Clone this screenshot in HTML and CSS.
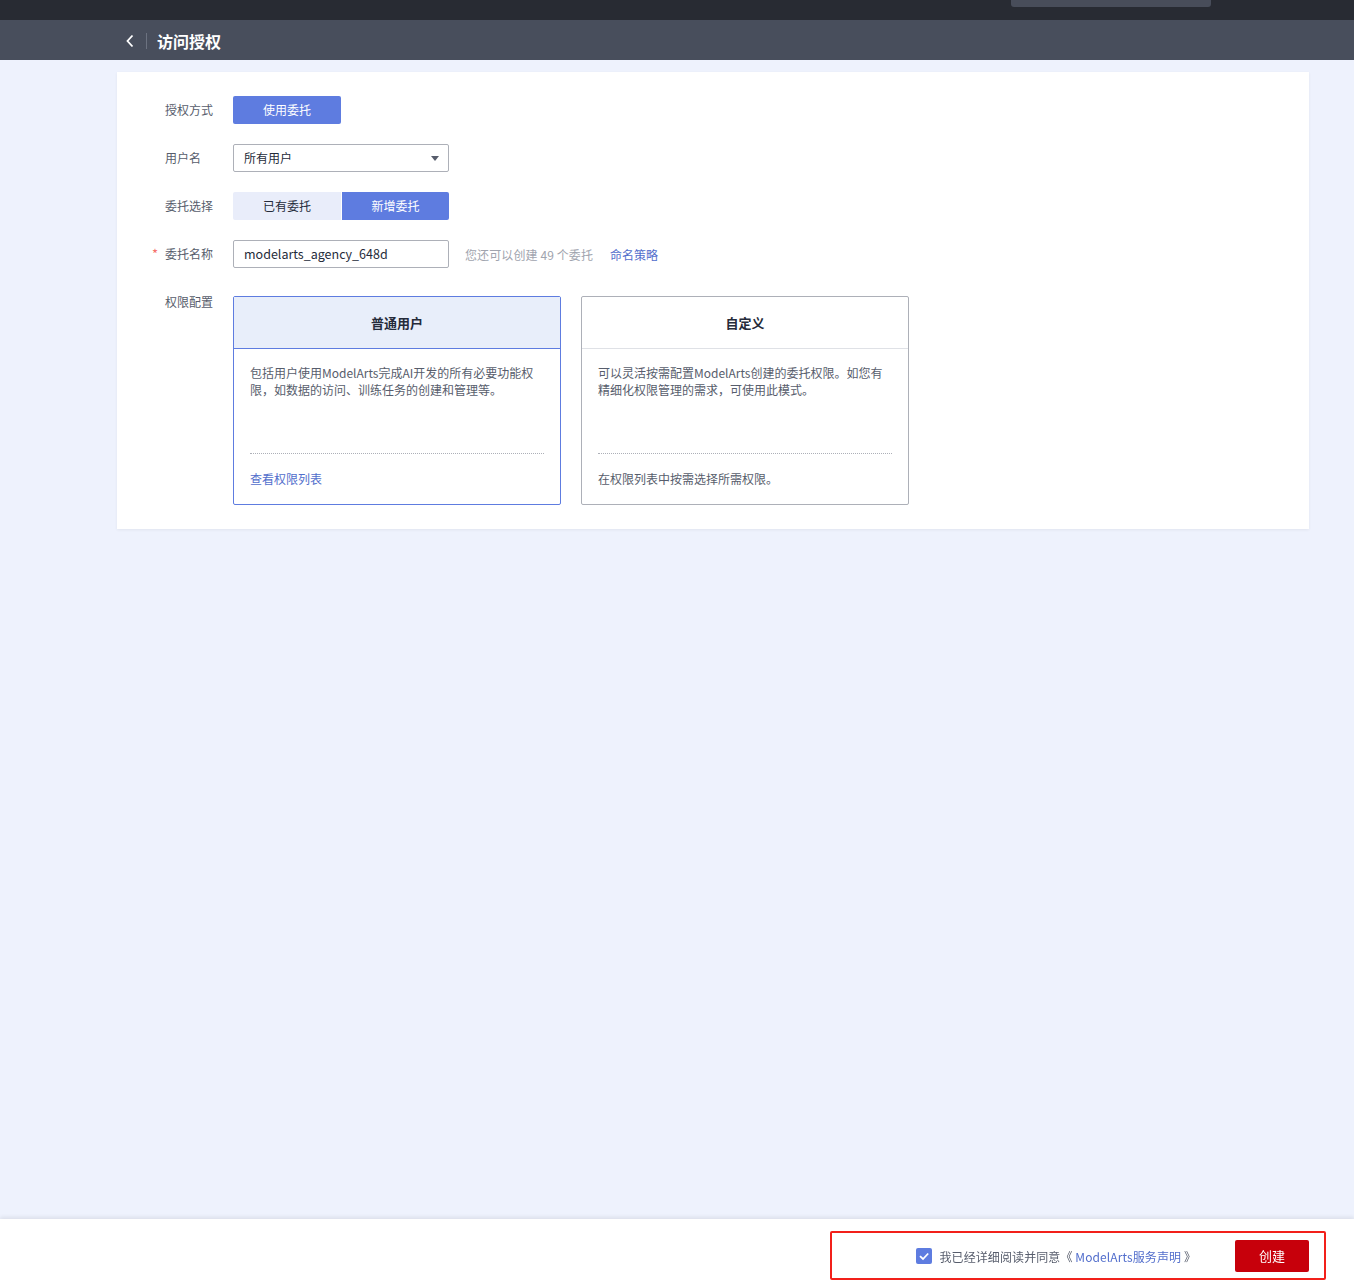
FILE: index.html
```html
<!DOCTYPE html>
<html lang="zh-CN">
<head>
<meta charset="utf-8">
<title>访问授权</title>
<link rel="stylesheet" href="styles.css">
</head>
<body>
<div class="topbar"><div class="search"></div></div>
<div class="subbar">
  <span class="back"><svg width="10" height="14" viewBox="0 0 10 14"><path d="M7.5 1.5 L2.5 7 L7.5 12.5" fill="none" stroke="#fff" stroke-width="1.8"/></svg></span>
  <span class="divider"></span>
  <h1 class="title">访问授权</h1>
</div>
<main class="card">
  <div class="row">
    <div class="label">授权方式</div>
    <div class="field"><span class="btn-primary">使用委托</span></div>
  </div>
  <div class="row">
    <div class="label">用户名</div>
    <div class="field"><div class="select">所有用户<span class="caret"></span></div></div>
  </div>
  <div class="row">
    <div class="label">委托选择</div>
    <div class="field"><div class="seg"><span class="seg-item">已有委托</span><span class="seg-item active">新增委托</span></div></div>
  </div>
  <div class="row">
    <div class="label"><span class="req">*</span>委托名称</div>
    <div class="field"><div class="input">modelarts_agency_648d</div><span class="hint">您还可以创建 49 个委托</span><a class="link">命名策略</a></div>
  </div>
  <div class="row row-top">
    <div class="label label-top">权限配置</div>
    <div class="field options">
      <div class="opt selected">
        <div class="opt-head">普通用户</div>
        <div class="opt-body">
          <p class="opt-desc">包括用户使用ModelArts完成AI开发的所有必要功能权限，如数据的访问、训练任务的创建和管理等。</p>
          <p class="opt-foot"><a class="link">查看权限列表</a></p>
        </div>
      </div>
      <div class="opt">
        <div class="opt-head">自定义</div>
        <div class="opt-body">
          <p class="opt-desc">可以灵活按需配置ModelArts创建的委托权限。如您有精细化权限管理的需求，可使用此模式。</p>
          <p class="opt-foot">在权限列表中按需选择所需权限。</p>
        </div>
      </div>
    </div>
  </div>
</main>
<footer class="footer">
  <div class="mark">
    <span class="check"><svg width="16" height="16" viewBox="0 0 16 16"><path d="M4 8.2 L7 11 L12.2 5.5" fill="none" stroke="#fff" stroke-width="1.8"/></svg></span>
    <span class="agree">我已经详细阅读并同意《 <a class="link">ModelArts服务声明</a> 》</span>
    <span class="btn-create">创建</span>
  </div>
</footer>
</body>
</html>
```
FILE: styles.css
```css
* { box-sizing: border-box; }
html, body { margin: 0; padding: 0; }
body {
  background: #eef2fd;
  font-family: "Noto Sans CJK SC", "Noto Sans", sans-serif;
  font-size: 12px;
  color: #252b3a;
  min-height: 1281px;
}
.topbar {
  height: 20px;
  background: #282b33;
  position: relative;
}
.search {
  position: absolute;
  left: 1011px;
  top: 0;
  width: 200px;
  height: 7px;
  background: #484d5a;
  border-radius: 0 0 3px 3px;
}
.subbar {
  height: 40px;
  background: #484e5c;
  display: flex;
  align-items: center;
  padding-left: 125px;
  padding-top: 2px;
}
.back { display: flex; width: 12px; height: 14px; align-items: center; }
.divider { width: 1px; height: 16px; background: #6c7280; margin: 0 10px 0 9px; }
.title { margin: 0; font-size: 16px; font-weight: 700; color: #fff; line-height: 38px; }
.card {
  margin: 12px 45px 0 117px;
  background: #fff;
  padding: 24px 0 24px 0;
  display: flex;
  flex-direction: column;
  gap: 20px;
  box-shadow: 0 1px 3px rgba(0,0,0,0.06);
}
.row { display: flex; align-items: center; min-height: 28px; }
.row-top { align-items: flex-start; margin-top: 8px; }
.label {
  width: 116px;
  padding-left: 48px;
  text-align: left;
  color: #575d6c;
  line-height: 28px;
  white-space: nowrap;
}
.label-top { line-height: 12px; }
.req { color: #f66f6a; margin-left: -13px; margin-right: 7px; font-size: 13px; }
.field { display: flex; align-items: center; }
.btn-primary {
  display: inline-block;
  width: 108px;
  height: 28px;
  line-height: 28px;
  text-align: center;
  background: #5e7ce0;
  color: #fff;
  border-radius: 2px;
}
.select {
  position: relative;
  width: 216px;
  height: 28px;
  line-height: 26px;
  border: 1px solid #adb0b8;
  border-radius: 2px;
  padding-left: 10px;
  color: #252b3a;
}
.caret {
  position: absolute;
  right: 9px;
  top: 11px;
  width: 0; height: 0;
  border-left: 4px solid transparent;
  border-right: 4px solid transparent;
  border-top: 5px solid #575d6c;
}
.seg { display: flex; gap: 1px; }
.seg-item {
  width: 108px;
  height: 28px;
  line-height: 28px;
  text-align: center;
  background: #e9edfa;
  color: #252b3a;
  border-radius: 2px 0 0 2px;
}
.seg-item.active { background: #5e7ce0; color: #fff; border-radius: 0 2px 2px 0; width: 107px; }
.input {
  width: 216px;
  height: 28px;
  line-height: 26px;
  border: 1px solid #adb0b8;
  border-radius: 2px;
  padding-left: 10px;
  font-size: 12.5px;
  color: #252b3a;
}
.hint { color: #a0a4ae; margin-left: 16px; letter-spacing: 0.1px; }
.link { color: #526ecc; text-decoration: none; }
.hint + .link { margin-left: 17px; }
.options { gap: 20px; align-items: stretch; }
.opt {
  width: 328px;
  height: 209px;
  border: 1px solid #adb0b8;
  border-radius: 2px;
  display: flex;
  flex-direction: column;
}
.opt-head {
  height: 52px;
  border-bottom: 1px solid #dfe1e6;
  text-align: center;
  line-height: 51px;
  font-size: 13px;
  font-weight: 700;
  color: #252b3a;
}
.opt.selected { border-color: #5e7ce0; }
.opt.selected .opt-head { background: #e8eefa; border-bottom-color: #5e7ce0; }
.opt-body { padding: 15px 16px 0 16px; }
.opt-desc {
  margin: 0;
  height: 90px;
  line-height: 17px;
  color: #575d6c;
  border-bottom: 1px dotted #adb0b8;
}
.opt-foot { margin: 0; padding-top: 16px; line-height: 17px; color: #575d6c; }
.footer {
  position: fixed;
  left: 0; right: 0; bottom: 0;
  height: 62px;
  background: #fff;
  box-shadow: 0 -2px 4px rgba(0,0,0,0.08);
  display: flex;
  justify-content: flex-end;
  padding-top: 12px;
}
.mark {
  width: 496px;
  height: 49px;
  margin-right: 28px;
  border: 2px solid #f2201a;
  border-radius: 2px;
  display: flex;
  align-items: center;
  justify-content: flex-end;
  padding-right: 15px;
  padding-top: 1px;
}
.check {
  width: 16px; height: 16px;
  background: #5e7ce0;
  border-radius: 2px;
  display: flex;
  margin-right: 7px;
}
.agree { color: #575d6c; letter-spacing: 0.1px; }
.btn-create {
  margin-left: 39px;
  width: 74px;
  height: 32px;
  line-height: 32px;
  text-align: center;
  background: #c7000b;
  color: #fff;
  font-size: 13px;
  border-radius: 2px;
}
```
